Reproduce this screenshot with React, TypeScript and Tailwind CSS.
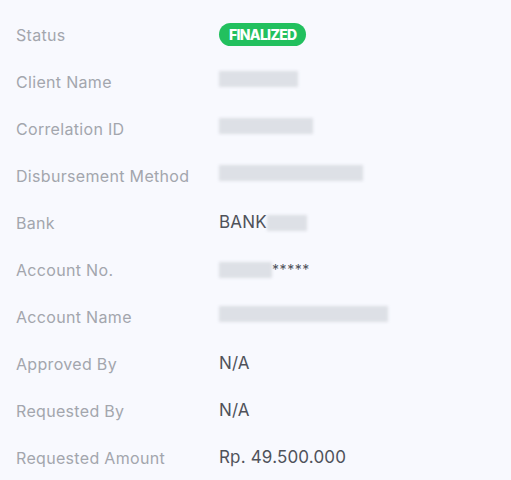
const Blur = ({ w }: { w: string }) => (
  <span className={`inline-block h-[16px] ${w} bg-gray-300/70 blur-[1.5px]`}></span>
)

const rows: { label: string; value: React.ReactNode }[] = [
  {
    label: 'Status',
    value: (
      <span className="inline-flex h-[23px] items-center rounded-full bg-[#22c05e] px-[10px] text-[14px] font-extrabold tracking-[-0.05em] text-white">
        FINALIZED
      </span>
    ),
  },
  { label: 'Client Name', value: <Blur w="w-[79px]" /> },
  { label: 'Correlation ID', value: <Blur w="w-[94px]" /> },
  { label: 'Disbursement Method', value: <Blur w="w-[144px]" /> },
  {
    label: 'Bank',
    value: (
      <span className="flex items-center">
        BANK
        <Blur w="w-[40px]" />
      </span>
    ),
  },
  {
    label: 'Account No.',
    value: (
      <span className="flex items-center">
        <Blur w="w-[53px]" />
        <span className="text-[14px] tracking-[0.04em]">*****</span>
      </span>
    ),
  },
  { label: 'Account Name', value: <Blur w="w-[169px]" /> },
  { label: 'Approved By', value: 'N/A' },
  { label: 'Requested By', value: 'N/A' },
  { label: 'Requested Amount', value: 'Rp. 49.500.000' },
]

export default function App() {
  return (
    <div className="min-h-[480px] w-full bg-[#f8f9fe] pt-[11px] font-['Inter',sans-serif]">
      {rows.map((r) => (
        <div key={r.label} className="flex h-[47px] items-center px-[16px]">
          <div className="w-[203px] text-[16px] tracking-[0.02em] text-[#a3a6ad]">{r.label}</div>
          <div className="text-[17px] tracking-[0.01em] text-[#4f525a]">{r.value}</div>
        </div>
      ))}
    </div>
  )
}
